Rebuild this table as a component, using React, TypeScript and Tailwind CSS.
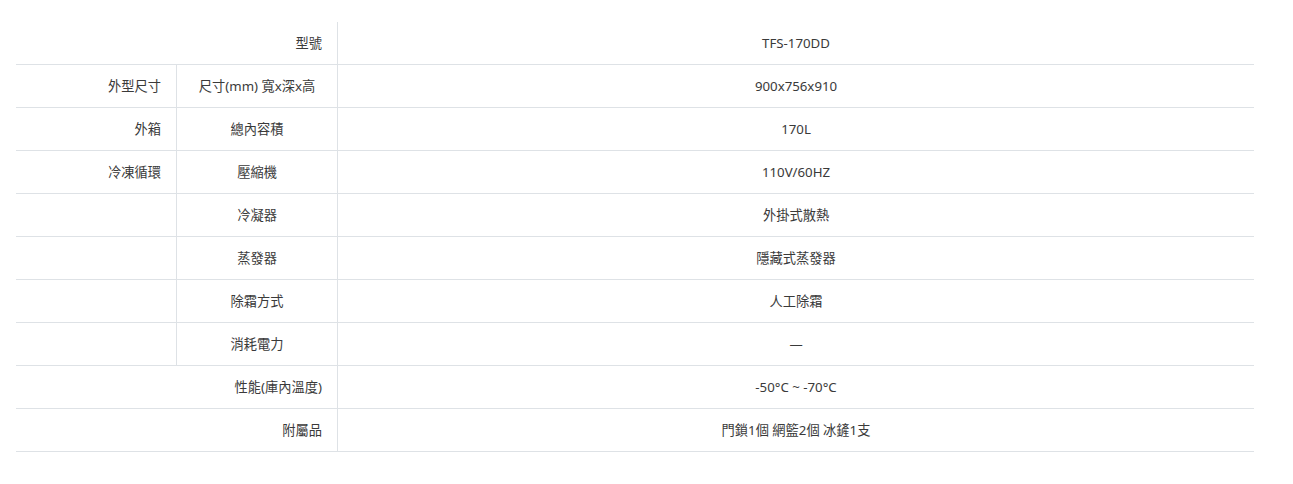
import React from 'react';

type Row = {
    head?: string;
    group?: string;
    item?: string;
    value: string;
};

const rows: Row[] = [
    { head: '型號', value: 'TFS-170DD' },
    { group: '外型尺寸', item: '尺寸(mm) 寬x深x高', value: '900x756x910' },
    { group: '外箱', item: '總內容積', value: '170L' },
    { group: '冷凍循環', item: '壓縮機', value: '110V/60HZ' },
    { group: '', item: '冷凝器', value: '外掛式散熱' },
    { group: '', item: '蒸發器', value: '隱藏式蒸發器' },
    { group: '', item: '除霜方式', value: '人工除霜' },
    { group: '', item: '消耗電力', value: '—' },
    { head: '性能(庫內溫度)', value: '-50°C ~ -70°C' },
    { head: '附屬品', value: '門鎖1個 網籃2個 冰鏟1支' },
];

const cell = 'border-b border-[#dee2e6] py-[11px] leading-5 align-middle';

const App: React.FC = () => {
    return (
        <div
            className="min-h-screen bg-white pt-[22px] pl-4 text-[13.25px] text-[#3a3a3a]"
            style={{ fontFamily: '"Noto Sans", "Noto Sans CJK TC", sans-serif' }}
        >
            <table className="w-[1238px] table-fixed border-separate border-spacing-0">
                <colgroup>
                    <col className="w-[161px]" />
                    <col className="w-[161px]" />
                    <col />
                </colgroup>
                <tbody>
                    {rows.map((r, i) => (
                        <tr key={i}>
                            {r.head !== undefined ? (
                                <td colSpan={2} className={`${cell} border-r pr-[15px] text-right`}>
                                    {r.head}
                                </td>
                            ) : (
                                <>
                                    <td className={`${cell} border-r pr-[15px] text-right`}>{r.group}</td>
                                    <td className={`${cell} border-r text-center`}>{r.item}</td>
                                </>
                            )}
                            <td className={`${cell} text-center`}>{r.value}</td>
                        </tr>
                    ))}
                </tbody>
            </table>
        </div>
    );
};

export default App;
